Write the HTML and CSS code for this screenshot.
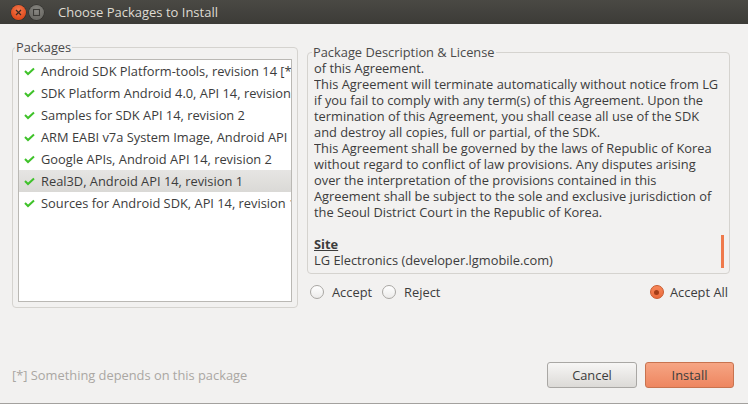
FILE: index.html
```html
<!DOCTYPE html>
<html>
<head>
<meta charset="utf-8">
<link rel="stylesheet" href="styles.css">
</head>
<body>
<div class="window">
  <header class="titlebar">
    <div class="wbtns">
      <span class="wbtn close"><svg width="15" height="15" viewBox="0 0 15 15"><path d="M5 5 L10 10 M10 5 L5 10" stroke="#3a2a22" stroke-width="1.2" fill="none"/></svg></span>
      <span class="wbtn max"><svg width="15" height="15" viewBox="0 0 15 15"><rect x="4.5" y="4.5" width="6" height="6" stroke="#3c3b37" stroke-width="1.1" fill="none"/></svg></span>
    </div>
    <span class="title">Choose Packages to Install</span>
  </header>
  <main class="main">
    <section class="group packages">
      <span class="legend">Packages</span>
      <ul class="pkglist">
        <li class="pkg"><svg class="chk" width="11" height="9" viewBox="0 0 11 9"><path d="M1 4 L4 7 L10 1.5" stroke="#3fc22a" stroke-width="2" fill="none"/></svg><span>Android SDK Platform-tools, revision 14 [*]</span></li>
        <li class="pkg"><svg class="chk" width="11" height="9" viewBox="0 0 11 9"><path d="M1 4 L4 7 L10 1.5" stroke="#3fc22a" stroke-width="2" fill="none"/></svg><span>SDK Platform Android 4.0, API 14, revision 14</span></li>
        <li class="pkg"><svg class="chk" width="11" height="9" viewBox="0 0 11 9"><path d="M1 4 L4 7 L10 1.5" stroke="#3fc22a" stroke-width="2" fill="none"/></svg><span>Samples for SDK API 14, revision 2</span></li>
        <li class="pkg"><svg class="chk" width="11" height="9" viewBox="0 0 11 9"><path d="M1 4 L4 7 L10 1.5" stroke="#3fc22a" stroke-width="2" fill="none"/></svg><span>ARM EABI v7a System Image, Android API 14, revision 2</span></li>
        <li class="pkg"><svg class="chk" width="11" height="9" viewBox="0 0 11 9"><path d="M1 4 L4 7 L10 1.5" stroke="#3fc22a" stroke-width="2" fill="none"/></svg><span>Google APIs, Android API 14, revision 2</span></li>
        <li class="pkg selected"><svg class="chk" width="11" height="9" viewBox="0 0 11 9"><path d="M1 4 L4 7 L10 1.5" stroke="#3fc22a" stroke-width="2" fill="none"/></svg><span>Real3D, Android API 14, revision 1</span></li>
        <li class="pkg"><svg class="chk" width="11" height="9" viewBox="0 0 11 9"><path d="M1 4 L4 7 L10 1.5" stroke="#3fc22a" stroke-width="2" fill="none"/></svg><span>Sources for Android SDK, API 14, revision 1</span></li>
      </ul>
    </section>
    <div class="right">
      <section class="group desc">
        <span class="legend">Package Description &amp; License</span>
        <div class="desc-text">
          <p>of this Agreement.</p>
          <p>This Agreement will terminate automatically without notice from LG<br>if you fail to comply with any term(s) of this Agreement. Upon the<br>termination of this Agreement, you shall cease all use of the SDK<br>and destroy all copies, full or partial, of the SDK.</p>
          <p>This Agreement shall be governed by the laws of Republic of Korea<br>without regard to conflict of law provisions. Any disputes arising<br>over the interpretation of the provisions contained in this<br>Agreement shall be subject to the sole and exclusive jurisdiction of<br>the Seoul District Court in the Republic of Korea.</p>
          <p class="blank">&nbsp;</p>
          <p class="site-h">Site</p>
          <p>LG Electronics (developer.lgmobile.com)</p>
        </div>
        <span class="scroll-ind"></span>
      </section>
      <div class="choices">
        <label class="choice"><span class="radio"></span>Accept</label>
        <label class="choice"><span class="radio"></span>Reject</label>
        <label class="choice all"><span class="radio on"></span>Accept All</label>
      </div>
    </div>
  </main>
  <footer class="footer">
    <span class="note">[*] Something depends on this package</span>
    <div class="buttons">
      <button class="btn cancel">Cancel</button>
      <button class="btn install">Install</button>
    </div>
  </footer>
</div>
</body>
</html>
```
FILE: styles.css
```css
* { box-sizing: border-box; }
html, body { margin: 0; padding: 0; }
body {
  background: #f2f1f0;
  font-family: "Open Sans", "DejaVu Sans", sans-serif;
  font-size: 12.85px;
  color: #3c3c3c;
}
.window {
  width: 748px;
  height: 404px;
  display: flex;
  flex-direction: column;
  border-bottom: 1px solid #a3a19e;
  overflow: hidden;
}
.titlebar {
  height: 24px;
  flex: none;
  display: flex;
  align-items: center;
  padding-left: 11px;
  background: linear-gradient(#4a4944, #3c3b37);
}
.wbtns { display: flex; gap: 3px; }
.wbtn {
  width: 15px;
  height: 15px;
  border-radius: 50%;
  display: block;
}
.wbtn svg { display: block; }
.close {
  background: radial-gradient(circle at 50% 35%, #f47b50, #df4a1c 70%);
  box-shadow: 0 0 0 0.5px #2e2d2a;
}
.max {
  background: radial-gradient(circle at 50% 35%, #8a8984, #6c6b66 70%);
  box-shadow: 0 0 0 0.5px #2e2d2a;
}
.title {
  margin-left: 14px;
  font-size: 13px;
  color: #dfdbd2;
}
.main {
  display: flex;
  align-items: flex-start;
  padding: 23px 0 0 12px;
}
.group {
  position: relative;
  border: 1px solid #d5d3cf;
  border-radius: 4px;
}
.legend {
  position: absolute;
  top: -8px;
  line-height: 15px;
  padding: 0 1px;
  background: #f2f1f0;
  color: #4a4a4a;
  white-space: nowrap;
}
.packages {
  width: 286px;
  padding: 11px 5px 5px 5px;
}
.packages .legend { left: 2px; }
.pkglist {
  list-style: none;
  margin: 0;
  padding: 0;
  height: 243px;
  background: #fff;
  border: 1px solid #bab8b4;
  overflow: hidden;
}
.pkg {
  height: 22px;
  display: flex;
  align-items: center;
  padding-left: 5px;
  white-space: nowrap;
  color: #3c3c3c;
}
.pkg.selected { background: linear-gradient(#e6e5e3, #dad9d6); }
.chk { flex: none; margin-right: 6px; }
.right {
  margin-left: 9px;
  margin-top: 5px;
  width: 423px;
}
.desc {
  width: 423px;
  padding: 7px 6px 5px 6px;
}
.desc .legend { left: 4px; }
.desc-text {
  height: 208px;
  overflow: hidden;
  line-height: 16px;
  white-space: nowrap;
  color: #3c3c3c;
}
.desc-text p { margin: 0; }
.site-h { font-weight: bold; text-decoration: underline; }
.scroll-ind {
  position: absolute;
  right: 5px;
  top: 182px;
  width: 3px;
  height: 33px;
  background: #ef7a4c;
}
.choices {
  display: flex;
  align-items: center;
  height: 22px;
  margin-top: 7px;
  padding-left: 3px;
  padding-right: 2px;
  gap: 10px;
}
.choice {
  display: flex;
  align-items: center;
  gap: 8px;
  color: #3c3c3c;
}
.choice.all { margin-left: auto; gap: 6px; }
.radio {
  width: 14px;
  height: 14px;
  border-radius: 50%;
  border: 1px solid #a9a7a3;
  background: linear-gradient(#ffffff, #ecebea);
  position: relative;
}
.radio.on {
  border-color: #c9582c;
  background: linear-gradient(#f7875a, #ea6a3b);
}
.radio.on::after {
  content: "";
  position: absolute;
  left: 3.5px;
  top: 3.5px;
  width: 5px;
  height: 5px;
  border-radius: 50%;
  background: #a33c17;
}
.footer {
  margin-top: auto;
  display: flex;
  align-items: center;
  justify-content: space-between;
  padding: 0 14px 15px 12px;
}
.note { color: #aaa7a3; }
.buttons { display: flex; gap: 8px; }
.btn {
  height: 26px;
  border-radius: 3px;
  font-family: inherit;
  font-size: 12.85px;
  color: #3c3c3c;
  padding: 0;
}
.cancel {
  width: 90px;
  border: 1px solid #a9a7a4;
  background: linear-gradient(#f7f6f5, #dcdad7);
}
.install {
  width: 89px;
  border: 1px solid #c8734f;
  background: linear-gradient(#f6a584, #ee8660);
}
```
